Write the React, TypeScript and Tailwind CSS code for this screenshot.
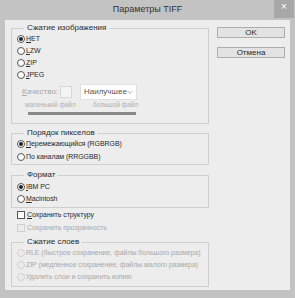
import React, { useState } from 'react';

const font = { fontFamily: '"Liberation Sans", Arial, sans-serif' };

const Radio: React.FC<{ checked?: boolean; disabled?: boolean; label: React.ReactNode; className?: string }> = ({
  checked,
  disabled,
  label,
  className = '',
}) => (
  <div className={`flex items-center h-[12px] ${className}`}>
    <span
      className={`shrink-0 w-[8px] h-[8px] rounded-full border flex items-center justify-center ${
        disabled ? 'border-[#cfcfcf] bg-[#ececec]' : 'border-[#555] bg-white'
      }`}
    >
      {checked && <span className="w-[4px] h-[4px] rounded-full bg-[#222]" />}
    </span>
    <span
      className={`ml-[1px] whitespace-nowrap text-[7px] tracking-[-0.05px] ${
        disabled ? 'text-[#a8a8a8]' : 'text-[#2a2a2a]'
      }`}
    >
      {label}
    </span>
  </div>
);

const Group: React.FC<{ title: string; className?: string; children: React.ReactNode }> = ({
  title,
  className = '',
  children,
}) => (
  <fieldset className={`border border-[#cfcfcf] w-[198px] min-w-0 pl-[5px] ${className}`}>
    <legend className="ml-[7px] px-[3px] leading-[10px] text-[#2a2a2a]">{title}</legend>
    {children}
  </fieldset>
);

export default function App() {
  const [compression] = useState('none');

  return (
    <div className="w-[295px] h-[298px] bg-[#c3c3c3] flex flex-col text-[8px]" style={font}>
      <div className="h-[20px] relative flex items-center justify-center">
        <span className="text-[9px] text-[#333]">Параметры TIFF</span>
        <div className="absolute right-[1px] top-0 w-[20px] h-[18px] bg-[#a7a7a7] flex items-start justify-center pt-[1px] text-white text-[10px] leading-[12px]">
          ×
        </div>
      </div>

      <div className="mx-[5px] h-[270px] bg-[#ededed] flex">
        <div className="w-[204px] shrink-0 pl-[6px] pt-[3px] flex flex-col">
          <Group title="Сжатие изображения" className="pb-[8px]">
            <Radio checked={compression === 'none'} label={<><u>Н</u>ЕТ</>} />
            <Radio label={<><u>L</u>ZW</>} />
            <Radio label={<><u>Z</u>IP</>} />
            <Radio label={<><u>J</u>PEG</>} />
            <div className="flex items-center h-[16px] mt-[3px] text-[#a8a8a8]">
              <span className="ml-[5px] w-[38px]">
                <u>К</u>ачество:
              </span>
              <span className="w-[12px] h-[12px] border border-[#d8d8d8] bg-[#f4f4f4]" />
              <div className="ml-[8px] w-[57px] h-[16px] bg-white border border-[#e0e0e0] flex items-center justify-between px-[3px] text-[#555]">
                <span>Наилучшее</span>
                <svg width="7" height="5" viewBox="0 0 7 5">
                  <path d="M1 1 L3.5 3.5 L6 1" fill="none" stroke="#999" strokeWidth="1" />
                </svg>
              </div>
            </div>
            <div className="flex justify-between h-[10px] items-center w-[113px] ml-[8px] text-[6.5px] text-[#b0b0b0]">
              <span>маленький файл</span>
              <span>большой файл</span>
            </div>
            <div className="ml-[11px] mt-[2px] w-[108px] h-[3px] bg-[#8a8a8a]" />
          </Group>

          <Group title="Порядок пикселов" className="mt-[4px] pb-[1px]">
            <Radio checked label={<><u>П</u>еремежающийся (RGBRGB)</>} />
            <Radio className="mt-[1px]" label={<>По каналам (RRGGBB)</>} />
          </Group>

          <Group title="Формат" className="mt-[5px] pb-[2px]">
            <Radio checked className="mt-[1px]" label={<><u>I</u>BM PC</>} />
            <Radio label={<><u>M</u>acintosh</>} />
          </Group>

          <div className="pl-[6px] mt-[1px] text-[7px] tracking-[-0.05px]">
            <div className="flex items-center h-[12px]">
              <span className="w-[8px] h-[8px] border border-[#555] bg-white" />
              <span className="ml-[2px] text-[#2a2a2a]">
                <u>С</u>охранить структуру
              </span>
            </div>
            <div className="flex items-center h-[12px] mt-[1px]">
              <span className="w-[8px] h-[8px] border border-[#d0d0d0] bg-[#ececec]" />
              <span className="ml-[2px] text-[#a8a8a8]">Сохранить прозрачность</span>
            </div>
          </div>

          <Group title="Сжатие слоев" className="mt-[3px] pb-[3px]">
            <Radio disabled label="RLE (быстрое сохранение, файлы большого размера)" />
            <Radio disabled label="ZIP (медленное сохранение, файлы малого размера)" />
            <Radio disabled label="Удалить слои и сохранить копию" />
          </Group>
        </div>

        <div className="ml-[8px] pt-[7px] flex flex-col gap-[9px]">
          <button className="w-[68px] h-[11px] bg-[#e3e3e3] border border-[#adadad] text-[#2a2a2a] leading-[9px]">
            OK
          </button>
          <button className="w-[68px] h-[11px] bg-[#e3e3e3] border border-[#adadad] text-[#2a2a2a] leading-[9px]">
            Отмена
          </button>
        </div>
      </div>
    </div>
  );
}
